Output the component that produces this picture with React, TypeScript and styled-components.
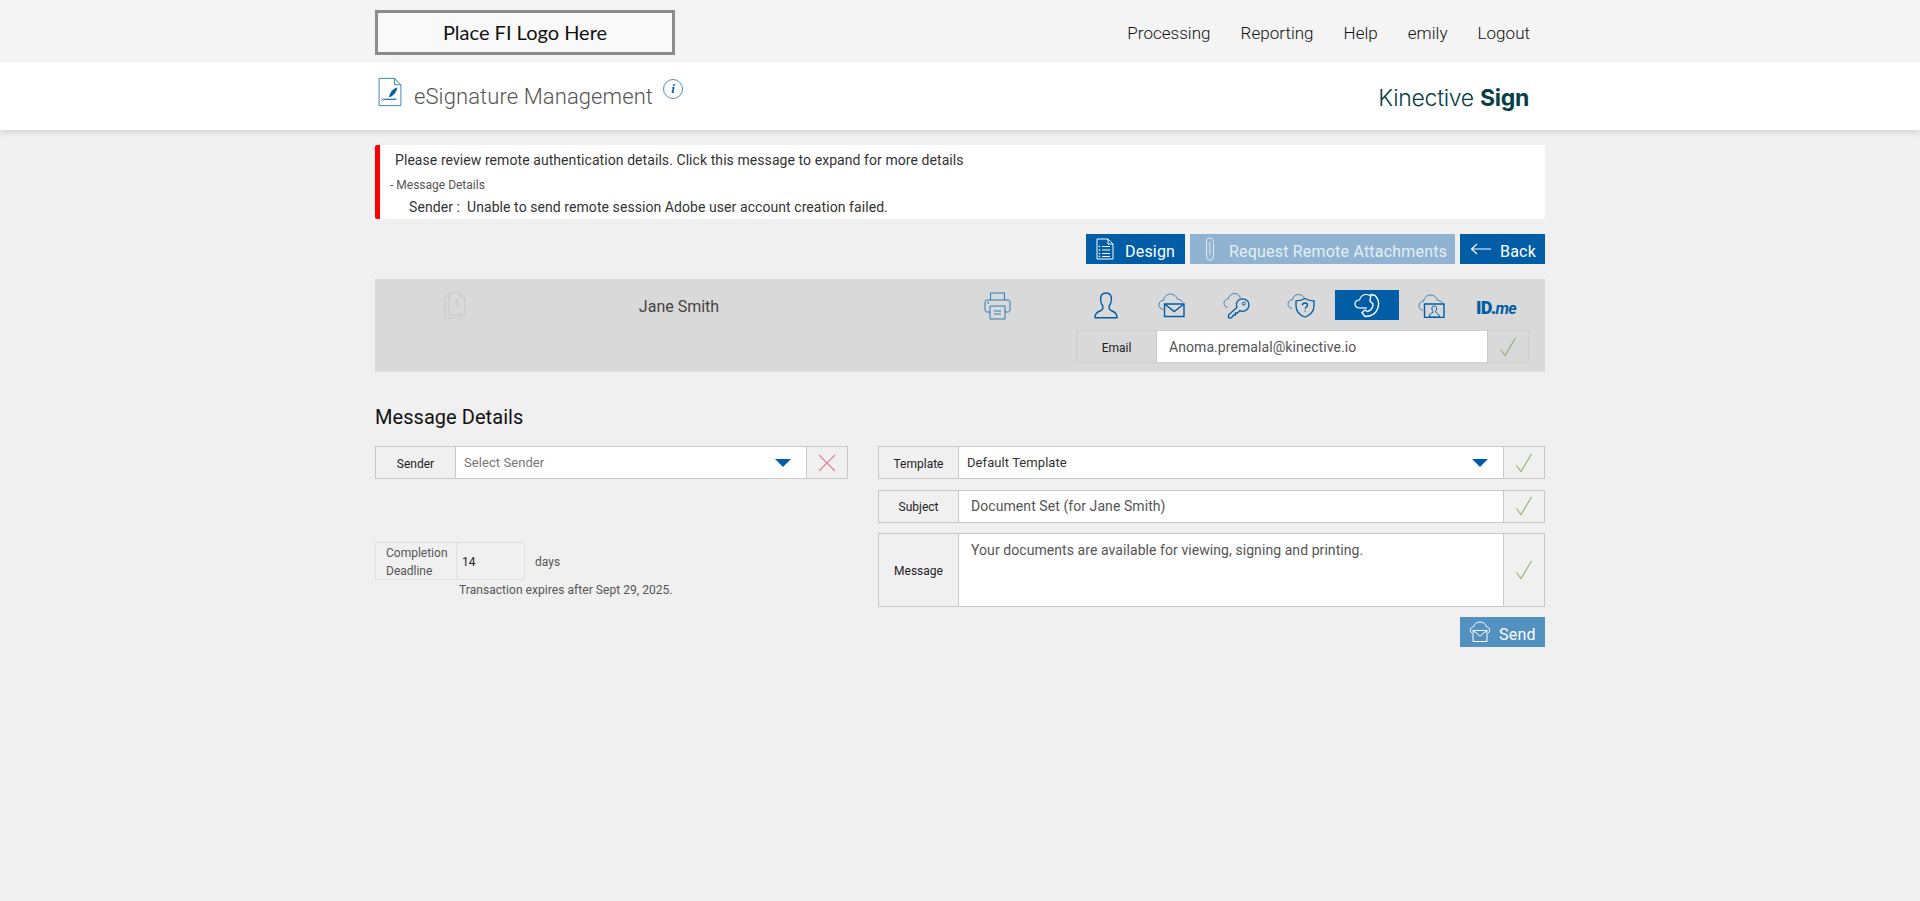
import styled, { createGlobalStyle } from "styled-components";

const BLUE = "#005da6";
const PANEL = "#d9d9d9";

const GlobalStyle = createGlobalStyle`
  html, body {
    margin: 0;
    padding: 0;
    background: #f0f0f0;
    font-family: Roboto, "Liberation Sans", sans-serif;
    color: #333;
  }
  * { box-sizing: border-box; }
`;

const Container = styled.div`
  width: 1170px;
  margin: 0 auto;
`;

const TopBar = styled.header`
  height: 62px;
  background: #f4f4f4;
`;

const TopInner = styled(Container)`
  display: flex;
  justify-content: space-between;
  padding-top: 10px;
`;

const LogoBox = styled.div`
  width: 300px;
  height: 45px;
  padding-bottom: 2px;
  border: 3px solid #8c8c8c;
  background: #f9f9f9;
  display: flex;
  align-items: center;
  justify-content: center;
  font-family: Lato, sans-serif;
  font-size: 20px;
  color: #111;
`;

const Nav = styled.nav`
  display: flex;
  gap: 30px;
  padding: 13px 15px 0 0;
  font-size: 17px;
  font-weight: 300;
  line-height: 20px;
  letter-spacing: 0.03px;
  color: #111;
`;

const TitleBar = styled.div`
  height: 68px;
  background: #fff;
  box-shadow: 0 2px 6px rgba(0, 0, 0, 0.14);
`;

const TitleInner = styled(Container)`
  display: flex;
  justify-content: space-between;
  padding: 15px 16px 0 3px;
`;

const TitleLeft = styled.div`
  display: flex;
  align-items: flex-start;
`;

const PageTitle = styled.h1`
  margin: 5px 0 0 12px;
  font-size: 22px;
  font-weight: 300;
  line-height: 30px;
  letter-spacing: 0.1px;
  color: #555;
`;

const InfoMark = styled.span`
  width: 20px;
  height: 20px;
  margin: 2px 0 0 10px;
  border: 1px solid #4a94c8;
  border-radius: 50%;
  display: flex;
  align-items: center;
  justify-content: center;
  font-family: "Liberation Serif", serif;
  font-style: italic;
  font-weight: 700;
  font-size: 13px;
  color: #005da6;
`;

const Brand = styled.div`
  padding-top: 6px;
  font-family: Inter, sans-serif;
  font-size: 23px;
  font-weight: 300;
  line-height: 30px;
  letter-spacing: -0.3px;
  color: #063f48;

  b {
    font-weight: 700;
  }
`;

const Alert = styled.div`
  margin-top: 15px;
  height: 74px;
  background: #fff;
  border-left: 5px solid #f00;
  border-radius: 2px;
  font-size: 14px;
  letter-spacing: 0.07px;
  color: #333;
`;

const AlertTitle = styled.div`
  padding: 5px 0 0 15px;
  line-height: 20px;
`;

const AlertSub = styled.div`
  padding: 7px 0 0 10px;
  font-size: 12px;
  line-height: 16px;
  letter-spacing: 0;
  color: #555;
`;

const AlertLine = styled.div`
  padding: 6px 0 0 29px;
  line-height: 17px;
`;

const ActionRow = styled.div`
  margin-top: 15px;
  display: flex;
  justify-content: flex-end;
  gap: 5px;
`;

const ActionButton = styled.button<{ $tone?: "solid" | "faded" | "soft"; $width: number; $gap: number; $inset: number }>`
  width: ${({ $width }) => $width}px;
  height: 30px;
  padding: 0 0 0 ${({ $inset }) => $inset}px;
  border: 0;
  display: flex;
  align-items: center;
  gap: ${({ $gap }) => $gap}px;
  background: ${({ $tone }) =>
    $tone === "faded" ? "#8fb3d1" : $tone === "soft" ? "#5391c1" : BLUE};
  color: ${({ $tone }) => ($tone === "faded" ? "#e6eef5" : "#fff")};
  font-family: inherit;
  font-size: 16px;
  letter-spacing: 0.2px;
  white-space: nowrap;

  span {
    padding-top: 4px;
  }
`;

const Panel = styled.section`
  margin-top: 15px;
  padding: 11px 15px 9px 0;
  height: 93px;
  background: ${PANEL};
  border-bottom: 1px solid #e2e2e2;
  display: grid;
  grid-template-columns: 160px 288px 252px 455px;
`;

const DocCell = styled.div`
  display: flex;
  justify-content: center;
  padding-top: 2px;
`;

const SignerName = styled.div`
  padding-top: 2px;
  text-align: center;
  font-size: 16px;
  line-height: 30px;
  color: #444;
`;

const PrintCell = styled.div`
  padding: 2px 0 0 97px;
  display: flex;
  justify-content: center;
`;

const AuthColumn = styled.div`
  display: flex;
  flex-direction: column;
  gap: 10px;
`;

const AuthIcons = styled.div`
  display: grid;
  grid-template-columns: repeat(7, 65px);
`;

const AuthTile = styled.div<{ $active?: boolean }>`
  height: 30px;
  margin-right: 1px;
  padding-right: ${({ $active }) => ($active ? 0 : 2)}px;
  display: flex;
  align-items: center;
  justify-content: center;
  background: ${({ $active }) => ($active ? BLUE : "transparent")};
`;

const IdMe = styled.span`
  margin-top: 4px;
  font-size: 18px;
  font-weight: 900;
  letter-spacing: -0.7px;
  color: ${BLUE};

  i {
    font-size: 16px;
    font-weight: 700;
  }
`;

const FieldRow = styled.div<{ $height?: number; $tint?: boolean }>`
  height: ${({ $height }) => $height ?? 33}px;
  margin: 0 ${({ $tint }) => ($tint ? 1 : 0)}px;
  display: flex;
  border: 1px solid ${({ $tint }) => ($tint ? "#cecece" : "#c8c8c8")};
  font-size: 12px;
`;

const FieldLabel = styled.div<{ $width: number; $tint?: boolean }>`
  width: ${({ $width }) => $width}px;
  flex: none;
  display: flex;
  align-items: center;
  justify-content: center;
  padding-top: 2px;
  background: ${({ $tint }) => ($tint ? PANEL : "#f0f0f0")};
  border-right: 1px solid #c8c8c8;
  color: #222;
`;

const FieldValue = styled.div<{ $size?: number; $color?: string; $inset?: number; $top?: boolean }>`
  flex: 1;
  min-width: 0;
  background: #fff;
  display: flex;
  align-items: ${({ $top }) => ($top ? "flex-start" : "center")};
  justify-content: space-between;
  padding: ${({ $top }) => ($top ? "7px" : "0")} 0 0 ${({ $inset }) => $inset ?? 10}px;
  font-size: ${({ $size }) => $size ?? 14}px;
  letter-spacing: 0.07px;
  color: ${({ $color }) => $color ?? "#555"};
  line-height: 18px;
`;

const Caret = styled.span`
  width: 0;
  height: 0;
  margin-right: 15px;
  border-left: 8px solid transparent;
  border-right: 8px solid transparent;
  border-top: 8px solid ${BLUE};
`;

const FieldEnd = styled.div<{ $width: number; $tint?: boolean }>`
  width: ${({ $width }) => $width}px;
  flex: none;
  display: flex;
  align-items: center;
  justify-content: center;
  background: ${({ $tint }) => ($tint ? PANEL : "#f0f0f0")};
  border-left: 1px solid #c8c8c8;
`;

const SectionTitle = styled.h2`
  margin: 33px 0 17px;
  font-size: 20px;
  font-weight: 400;
  line-height: 24px;
  letter-spacing: 0.05px;
  color: #111;
`;

const FormGrid = styled.div`
  display: grid;
  grid-template-columns: 473px 667px;
  gap: 30px;
  align-items: start;
`;

const LeftColumn = styled.div`
  display: flex;
  flex-direction: column;
`;

const RightColumn = styled.div`
  display: flex;
  flex-direction: column;
  gap: 10.5px;
`;

const DeadlineRow = styled.div`
  margin-top: 63px;
  display: flex;
  align-items: center;
  font-size: 12px;
  color: #555;
`;

const DeadlineBox = styled.div`
  width: 150px;
  height: 38px;
  display: flex;
  border: 1px solid #e0e0e0;
`;

const DeadlineLabel = styled.div`
  width: 81px;
  flex: none;
  border-right: 1px solid #e0e0e0;
  padding: 1px 0 0 10px;
  line-height: 18px;
`;

const DeadlineValue = styled.div`
  flex: 1;
  display: flex;
  align-items: center;
  padding: 2px 0 0 5px;
  color: #222;
`;

const DaysText = styled.span`
  margin: 2px 0 0 10px;
`;

const ExpiryNote = styled.div`
  margin: 2px 0 0 84px;
  font-size: 12px;
  line-height: 16px;
  letter-spacing: 0.05px;
  color: #555;
`;

const SendRow = styled.div`
  margin-top: -0.5px;
  display: flex;
  justify-content: flex-end;
`;

const CheckIcon = () => (
  <svg width="18" height="20" viewBox="0 0 18 20" fill="none" stroke="#8db36a" strokeWidth="1.1">
    <path d="M1.5 12.5 L6 18.5 L16.5 1" />
  </svg>
);

const CrossIcon = () => (
  <svg width="18" height="18" viewBox="0 0 18 18" fill="none" stroke="#e0808c" strokeWidth="1.1">
    <path d="M1 1 L17 17 M17 1 L1 17" />
  </svg>
);

const SignatureDocIcon = () => (
  <svg width="24" height="30" viewBox="0 0 26 33" fill="none" stroke="#2a7dbb" strokeWidth="1">
    <path d="M1 1.5 H18 L25 8.5 V31.5 H1 Z M18 1.5 V8.5 H25" />
    <path d="M6 24.5 H20" stroke="#005da6" strokeWidth="1.2" />
    <path d="M12 22 C13 16 17 12.5 21 11.5 C20.5 16 17 20.5 13 22 Z" fill="#005da6" stroke="none" />
    <path d="M3.5 23.5 L6 26 M6 23.5 L3.5 26" stroke="#005da6" strokeWidth="0.7" />
  </svg>
);

const DocListIcon = () => (
  <svg width="18" height="22" viewBox="0 0 18 22" fill="none" stroke="#fff" strokeWidth="1">
    <path d="M1 1 H12 L17 6 V21 H1 Z M12 1 V6 H17" />
    <path d="M6 8.5 H14 M6 12 H14 M6 15.5 H14 M6 18.5 H14" />
    <path d="M2.8 8.5 H4.2 M2.8 12 H4.2 M2.8 15.5 H4.2 M2.8 18.5 H4.2" strokeWidth="1.6" />
  </svg>
);

const ClipIcon = () => (
  <svg width="12" height="24" viewBox="0 0 12 24" fill="none" stroke="#dde8f1" strokeWidth="1.1">
    <path d="M9.5 6 V18.5 C9.5 21 8 23 6 23 C4 23 2.5 21 2.5 18.5 V5 C2.5 2.8 4 1 5.8 1 C7.8 1 9.5 2.8 9.5 5 M5.8 5 V17.5" />
  </svg>
);

const ArrowIcon = () => (
  <svg width="22" height="12" viewBox="0 0 22 12" fill="none" stroke="#fff" strokeWidth="1.1">
    <path d="M21 6 H1.5 M7 1 L1.5 6 L7 11" />
  </svg>
);

const StackedDocIcon = () => (
  <svg width="22" height="27" viewBox="0 0 22 27" fill="none" stroke="#c9c9c9" strokeWidth="1">
    <path d="M5 1 H16 L21 6 V23 H5 Z M16 1 V6 H21" />
    <path d="M5 4 H1 V26 H17 V23" />
    <path d="M11.5 9.5 L13.5 8.5 V16" strokeWidth="1.4" />
  </svg>
);

const PrinterIcon = () => (
  <svg width="27" height="28" viewBox="0 0 27 28" fill="none" stroke="#2a7dbb" strokeWidth="1">
    <path d="M6.5 8 V1 H20.5 V8" />
    <path d="M6 20 H3 C1.5 20 1 19 1 18 V10 C1 9 1.5 8 3 8 H24 C25.5 8 26 9 26 10 V18 C26 19 25.5 20 24 20 H21" />
    <path d="M6 14 H21 V27 H6 Z" fill={PANEL} />
    <path d="M10 19 H17 M10 22 H17" />
    <path d="M3.5 10.8 H5" strokeWidth="1.4" />
  </svg>
);

const UserIcon = () => (
  <svg width="24" height="27" viewBox="0 0 24 27" fill="none" stroke={BLUE} strokeWidth="1.4">
    <path d="M12 1 C7.8 1 6.2 4 6.6 8 C6.9 10.5 7.6 12.5 8.8 14 V16 C8.8 17.5 7.5 18.5 5 19.5 C2 20.7 1 22 1 25.8 H23 C23 22 22 20.7 19 19.5 C16.5 18.5 15.2 17.5 15.2 16 V14 C16.4 12.5 17.1 10.5 17.4 8 C17.8 4 16.2 1 12 1 Z" />
  </svg>
);

const CLOUD = "M5 17.5 C2.5 17 1 15 1 12.8 C1 10.2 3 8.3 5.5 8.3 C6.3 4.5 9 2 12.5 2 C16 2 18.7 4.2 19.5 7.3";

const MailCloudIcon = () => (
  <svg width="27" height="26" viewBox="0 0 27 26" fill="none">
    <path d={CLOUD + " C21.5 7.3 24 8.5 25 10.5"} stroke="#3b84bb" strokeWidth="1" />
    <path d="M6.5 12 H26 V24.5 H6.5 Z M6.5 12 L16.2 19.5 L26 12" stroke={BLUE} strokeWidth="1.4" fill={PANEL} />
  </svg>
);

const KeyCloudIcon = () => (
  <svg width="27" height="27" viewBox="0 0 27 27" fill="none">
    <path d="M4.5 15.5 C2.3 15 1 13.3 1 11.3 C1 8.8 3 7 5.2 7 C6 3.8 8.5 1.5 11.5 1.5 C14.3 1.5 16.5 3.2 17.3 5.8" stroke="#3b84bb" strokeWidth="1" />
    <path d="M13.5 13.5 C13 9.5 16 6.8 19.5 6.8 C23 6.8 26 9.5 26 13 C26 16.5 23 19.3 19.5 19.3 C18.5 19.3 17.5 19 16.8 18.6 L14.5 21 H12.5 V23 H10.5 L8.5 25.8 H5.5 V23 L13.8 15.5 Z" stroke={BLUE} strokeWidth="1.3" fill={PANEL} />
    <circle cx="20.8" cy="11.6" r="1.5" stroke={BLUE} strokeWidth="1" />
  </svg>
);

const ShieldCloudIcon = () => (
  <svg width="28" height="25" viewBox="0 0 28 25" fill="none">
    <path d="M5 15.5 C2.6 15 1 13.2 1 11 C1 8.6 3 6.8 5.3 6.8 C6 3.6 8.5 1.5 11.5 1.5 C14 1.5 16.2 2.8 17.2 5" stroke="#3b84bb" strokeWidth="1" />
    <path d="M18 5.5 C20.5 7 23.5 7.8 27 7.8 V13 C27 18 23.5 22 18 24 C12.5 22 9 18 9 13 V7.8 C12.5 7.8 15.5 7 18 5.5 Z" stroke={BLUE} strokeWidth="1.3" fill={PANEL} />
    <path d="M15.5 12.2 C15.5 10.8 16.6 10 18 10 C19.5 10 20.5 11 20.5 12.2 C20.5 14 18.2 14 18.2 15.8 M18.2 17.4 V18.6" stroke={BLUE} strokeWidth="1.4" />
  </svg>
);

const PhoneCloudIcon = () => (
  <svg width="26" height="25" viewBox="0 0 26 25" fill="none" stroke="#fff">
    <path d="M5 15 C2.5 15 1 13 1 11 C1 8.5 3 7 5.5 7 C6.5 3.5 9 1.5 12.5 1.5 C14.5 1.5 16 2.3 17 3.5" strokeWidth="1.2" />
    <path d="M5 15 H13" strokeWidth="1.2" />
    <path d="M17 1.5 L21 2.5 C24.5 6 25.5 11 23.5 16 C21.5 21 17 23.5 11 23.5 L8 19.5 L11 17 L13.5 18.5 C17 17.5 19 14.5 19 11 L16 8 L17 1.5 Z" strokeWidth="1.4" />
  </svg>
);

const VideoCloudIcon = () => (
  <svg width="27" height="25" viewBox="0 0 27 25" fill="none">
    <path d={CLOUD + " C21.5 7.3 24 8.5 25 10.5"} stroke="#3b84bb" strokeWidth="1" />
    <path d="M6.5 11 H26 V24.5 H6.5 Z" stroke={BLUE} strokeWidth="1.4" fill={PANEL} />
    <path d="M16.2 13 C14.5 13 13.7 14.2 13.9 16 C14 17 14.5 17.8 15 18.3 V19.2 C13.5 20.3 11.5 20.5 11 24 H21.5 C21 20.5 19 20.3 17.5 19.2 V18.3 C18 17.8 18.5 17 18.6 16 C18.8 14.2 18 13 16.2 13 Z" stroke={BLUE} strokeWidth="1" />
  </svg>
);

const SendIcon = () => (
  <svg width="22" height="22" viewBox="0 0 22 22" fill="none" stroke="#fff" strokeWidth="1">
    <path d="M3 12 C1.5 11 1 9.5 1.5 8 C2 6.5 3.3 5.8 4.6 5.8 C5.2 3 7.8 1 11 1 C14.2 1 16.8 3 17.4 5.8 C18.7 5.8 20 6.5 20.5 8 C21 9.5 20.5 11 19 12" />
    <path d="M4 9.5 H18 V20.5 H4 Z M4 9.5 L11 15 L18 9.5" />
  </svg>
);

const authIcons = [
  { key: "user", icon: <UserIcon /> },
  { key: "mail", icon: <MailCloudIcon /> },
  { key: "key", icon: <KeyCloudIcon /> },
  { key: "shield", icon: <ShieldCloudIcon /> },
  { key: "phone", icon: <PhoneCloudIcon />, active: true },
  { key: "video", icon: <VideoCloudIcon /> },
  { key: "idme", icon: <IdMe>ID.<i>me</i></IdMe> },
];

const App = () => (
  <>
    <GlobalStyle />
    <TopBar>
      <TopInner>
        <LogoBox>Place FI Logo Here</LogoBox>
        <Nav>
          <span>Processing</span>
          <span>Reporting</span>
          <span>Help</span>
          <span>emily</span>
          <span>Logout</span>
        </Nav>
      </TopInner>
    </TopBar>
    <TitleBar>
      <TitleInner>
        <TitleLeft>
          <SignatureDocIcon />
          <PageTitle>eSignature Management</PageTitle>
          <InfoMark>i</InfoMark>
        </TitleLeft>
        <Brand>
          Kinective <b>Sign</b>
        </Brand>
      </TitleInner>
    </TitleBar>
    <Container>
      <Alert>
        <AlertTitle>
          Please review remote authentication details. Click this message to expand for more details
        </AlertTitle>
        <AlertSub>- Message Details</AlertSub>
        <AlertLine>Sender :&nbsp; Unable to send remote session Adobe user account creation failed.</AlertLine>
      </Alert>
      <ActionRow>
        <ActionButton $width={99} $inset={10} $gap={11}>
          <DocListIcon />
          <span>Design</span>
        </ActionButton>
        <ActionButton $tone="faded" $width={265} $inset={14} $gap={13}>
          <ClipIcon />
          <span>Request Remote Attachments</span>
        </ActionButton>
        <ActionButton $width={85} $inset={10} $gap={8}>
          <ArrowIcon />
          <span>Back</span>
        </ActionButton>
      </ActionRow>
      <Panel>
        <DocCell>
          <StackedDocIcon />
        </DocCell>
        <SignerName>Jane Smith</SignerName>
        <PrintCell>
          <PrinterIcon />
        </PrintCell>
        <AuthColumn>
          <AuthIcons>
            {authIcons.map((item) => (
              <AuthTile key={item.key} $active={item.active}>
                {item.icon}
              </AuthTile>
            ))}
          </AuthIcons>
          <FieldRow $tint>
            <FieldLabel $width={80} $tint>Email</FieldLabel>
            <FieldValue $inset={12}>Anoma.premalal@kinective.io</FieldValue>
            <FieldEnd $width={41} $tint>
              <CheckIcon />
            </FieldEnd>
          </FieldRow>
        </AuthColumn>
      </Panel>
      <SectionTitle>Message Details</SectionTitle>
      <FormGrid>
        <LeftColumn>
          <FieldRow>
            <FieldLabel $width={80}>Sender</FieldLabel>
            <FieldValue $size={13} $color="#777" $inset={8}>
              Select Sender
              <Caret />
            </FieldValue>
            <FieldEnd $width={41}>
              <CrossIcon />
            </FieldEnd>
          </FieldRow>
          <DeadlineRow>
            <DeadlineBox>
              <DeadlineLabel>
                Completion
                <br />
                Deadline
              </DeadlineLabel>
              <DeadlineValue>14</DeadlineValue>
            </DeadlineBox>
            <DaysText>days</DaysText>
          </DeadlineRow>
          <ExpiryNote>Transaction expires after Sept 29, 2025.</ExpiryNote>
        </LeftColumn>
        <RightColumn>
          <FieldRow>
            <FieldLabel $width={80}>Template</FieldLabel>
            <FieldValue $size={13} $color="#333" $inset={8}>
              Default Template
              <Caret />
            </FieldValue>
            <FieldEnd $width={41}>
              <CheckIcon />
            </FieldEnd>
          </FieldRow>
          <FieldRow>
            <FieldLabel $width={80}>Subject</FieldLabel>
            <FieldValue $inset={12}>Document Set (for Jane Smith)</FieldValue>
            <FieldEnd $width={41}>
              <CheckIcon />
            </FieldEnd>
          </FieldRow>
          <FieldRow $height={74}>
            <FieldLabel $width={80}>Message</FieldLabel>
            <FieldValue $inset={12} $top>
              Your documents are available for viewing, signing and printing.
            </FieldValue>
            <FieldEnd $width={41}>
              <CheckIcon />
            </FieldEnd>
          </FieldRow>
          <SendRow>
            <ActionButton $tone="soft" $width={85} $inset={9} $gap={8}>
              <SendIcon />
              <span>Send</span>
            </ActionButton>
          </SendRow>
        </RightColumn>
      </FormGrid>
    </Container>
  </>
);

export default App;
